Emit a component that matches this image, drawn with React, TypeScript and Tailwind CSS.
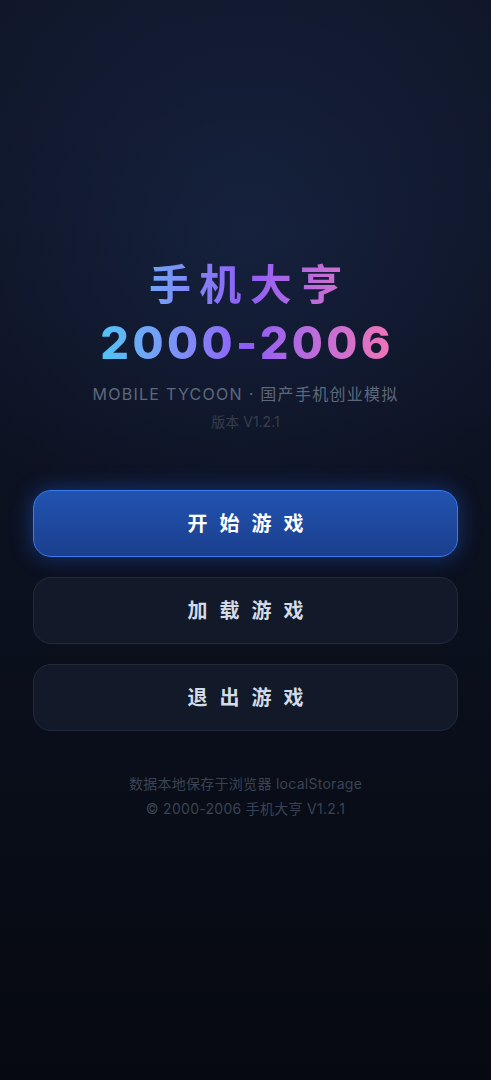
import React from "react";

const font = { fontFamily: '"Inter", "Noto Sans CJK SC", sans-serif' };

function MenuButton({ label, primary }: { label: string; primary?: boolean }) {
  return (
    <button
      className={
        primary
          ? "h-[67px] w-full rounded-[18px] border border-[#3b7cf0] bg-gradient-to-b from-[#2153b0] to-[#1b3f8e] text-[20px] font-bold text-white shadow-[0_0_22px_rgba(37,99,235,0.45)]"
          : "h-[67px] w-full rounded-[18px] border border-[#222b3c] bg-[#121a29] text-[20px] font-bold text-[#d3dbe8]"
      }
    >
      <span className="tracking-[0.6em] pl-[0.6em]">{label}</span>
    </button>
  );
}

export default function App() {
  return (
    <div
      style={font}
      className="relative min-h-screen w-full overflow-hidden bg-gradient-to-b from-[#10172a] via-[#0c1120] to-[#060910]"
    >
      <div className="pointer-events-none absolute left-1/2 top-[-80px] h-[620px] w-[700px] -translate-x-1/2 rounded-full bg-[radial-gradient(closest-side,rgba(30,48,90,0.45),rgba(30,48,90,0))]" />
      <div className="relative flex min-h-screen flex-col items-center justify-center px-[33px] pb-[4px]">
        <div className="flex flex-col items-center bg-gradient-to-r from-[#48c6f5] via-[#8e5cf6] to-[#f472b6] bg-clip-text text-transparent">
          <div className="text-[42px] font-bold leading-[56px] tracking-[0.2em] pl-[0.2em]">手机大亨</div>
          <div className="text-[45px] font-extrabold leading-[60px] tracking-[0.075em] pl-[0.075em]">2000-2006</div>
        </div>
        <div className="mt-[9px] text-[16px] leading-[24px] tracking-[0.08em] text-[#5d687c]">
          MOBILE TYCOON · 国产手机创业模拟
        </div>
        <div className="mt-[6px] text-[14px] leading-[20px] text-[#363e4e]">版本 V1.2.1</div>
        <div className="mt-[58px] flex w-full flex-col gap-[20px]">
          <MenuButton label="开始游戏" primary />
          <MenuButton label="加载游戏" />
          <MenuButton label="退出游戏" />
        </div>
        <div className="mt-[43px] flex flex-col items-center gap-[5px] text-[14px] leading-[20px] tracking-[0.02em] text-[#3a4354]">
          <div>数据本地保存于浏览器 localStorage</div>
          <div>© 2000-2006 手机大亨 V1.2.1</div>
        </div>
      </div>
    </div>
  );
}
